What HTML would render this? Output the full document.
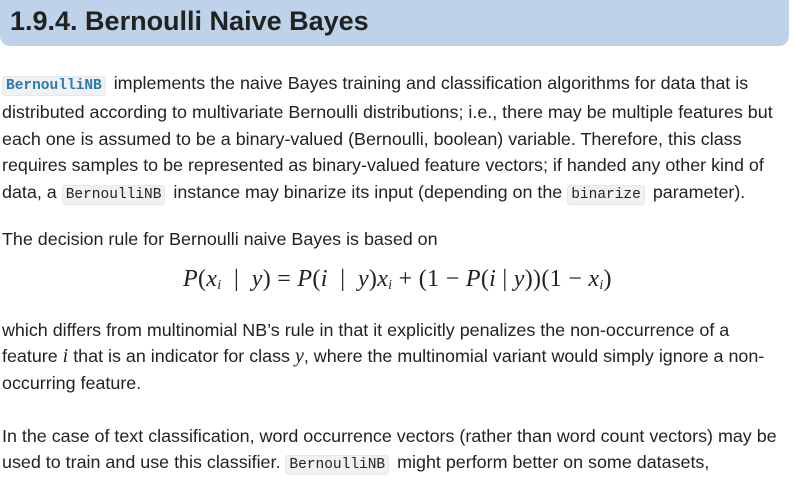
<!DOCTYPE html>
<html><head><style>
body{margin:0;background:#fff;width:794px;height:477px;overflow:hidden;font-family:"Liberation Sans",sans-serif;color:#222;}
h2{margin:0;position:absolute;left:0;top:0;width:789px;height:46px;background:#bed3ea;border-radius:0 0 10px 10px;font-size:27px;font-weight:bold;line-height:42px;padding-left:10px;box-sizing:border-box;color:#222;}
.p{position:absolute;left:2px;width:800px;font-size:17.9px;line-height:26.4px;margin:0;white-space:nowrap;}
code{font-family:"Liberation Mono",monospace;font-size:14.5px;background:#f0f1f2;border:1px solid #e6e8ea;border-radius:3px;padding:1px 3px;margin-right:3px;}
code.b{color:#2a7bb0;font-weight:bold;background:#f0f1f2;}
.m{font-family:"Liberation Serif",serif;font-style:italic;font-size:20px;}
.f{position:absolute;top:266px;left:183px;font-family:"Liberation Serif",serif;font-size:24px;white-space:nowrap;letter-spacing:0.3px;}
.f i{font-style:italic}
sub{font-size:14px;vertical-align:-3px;font-style:italic}
</style></head><body>
<h2>1.9.4. Bernoulli Naive Bayes</h2>
<p class="p" style="top:70px"><code class="b">BernoulliNB</code> implements the naive Bayes training and classification algorithms for data that is<br>distributed according to multivariate Bernoulli distributions; i.e., there may be multiple features but<br>each one is assumed to be a binary-valued (Bernoulli, boolean) variable. Therefore, this class<br>requires samples to be represented as binary-valued feature vectors; if handed any other kind of<br>data, a <code>BernoulliNB</code> instance may binarize its input (depending on the <code>binarize</code> parameter).</p>
<p class="p" style="top:226px">The decision rule for Bernoulli naive Bayes is based on</p>
<div class="f"><i>P</i>(<i>x</i><sub>i</sub> &nbsp;|&nbsp; <i>y</i>) = <i>P</i>(<i>i</i> &nbsp;|&nbsp; <i>y</i>)<i>x</i><sub>i</sub> + (1 − <i>P</i>(<i>i</i> | <i>y</i>))(1 − <i>x</i><sub>i</sub>)</div>
<p class="p" style="top:317px">which differs from multinomial NB’s rule in that it explicitly penalizes the non-occurrence of a<br>feature <span class="m">i</span> that is an indicator for class <span class="m">y</span>, where the multinomial variant would simply ignore a non-<br>occurring feature.</p>
<p class="p" style="top:423px">In the case of text classification, word occurrence vectors (rather than word count vectors) may be<br>used to train and use this classifier. <code>BernoulliNB</code> might perform better on some datasets,</p>
</body></html>
